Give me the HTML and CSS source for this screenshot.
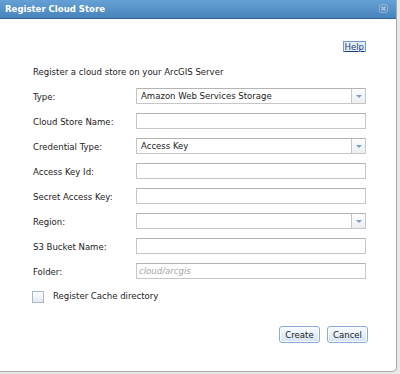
FILE: index.html
```html
<!DOCTYPE html>
<html lang="en">
<head>
    <meta charset="UTF-8">
    <title>Register Cloud Store</title>
    <link rel="stylesheet" href="styles.css">
</head>
<body>
    <div class="dialog">
        <div class="titlebar">
            <span class="title">Register Cloud Store</span>
            <span class="close-btn">
                <svg width="9" height="9" viewBox="0 0 9 9">
                    <rect x="0.5" y="0.5" width="8" height="8" rx="1.5" fill="none" stroke="#8fb1cf" stroke-width="1"/>
                    <path d="M2.5 2.5 L6.5 6.5 M6.5 2.5 L2.5 6.5" stroke="#a9c4dc" stroke-width="1.6"/>
                </svg>
            </span>
        </div>

        <div class="content">
            <div class="help-row">
                <a href="#" class="help-link">Help</a>
            </div>
            <p class="intro">Register a cloud store on your ArcGIS Server</p>

            <div class="form">
                <div class="form-row">
                    <label>Type:</label>
                    <div class="select">
                        <span class="select-value">Amazon Web Services Storage</span>
                        <span class="select-arrow"></span>
                    </div>
                </div>
                <div class="form-row">
                    <label>Cloud Store Name:</label>
                    <div class="text-input"></div>
                </div>
                <div class="form-row">
                    <label>Credential Type:</label>
                    <div class="select">
                        <span class="select-value">Access Key</span>
                        <span class="select-arrow"></span>
                    </div>
                </div>
                <div class="form-row">
                    <label>Access Key Id:</label>
                    <div class="text-input"></div>
                </div>
                <div class="form-row">
                    <label>Secret Access Key:</label>
                    <div class="text-input"></div>
                </div>
                <div class="form-row">
                    <label>Region:</label>
                    <div class="select">
                        <span class="select-value"></span>
                        <span class="select-arrow"></span>
                    </div>
                </div>
                <div class="form-row">
                    <label>S3 Bucket Name:</label>
                    <div class="text-input"></div>
                </div>
                <div class="form-row">
                    <label>Folder:</label>
                    <div class="text-input placeholder">cloud/arcgis</div>
                </div>
            </div>

            <div class="check-row">
                <span class="checkbox"></span>
                <span class="check-label">Register Cache directory</span>
            </div>

            <div class="actions">
                <button class="btn">Create</button>
                <button class="btn">Cancel</button>
            </div>
        </div>
    </div>
</body>
</html>
```

FILE: styles.css
```css
* {
    margin: 0;
    padding: 0;
    box-sizing: border-box;
}

body {
    background-color: #e9e9e9;
    font-family: Tahoma, 'DejaVu Sans Condensed', 'DejaVu Sans', sans-serif;
    font-size: 9.5px;
    color: #222;
    width: 400px;
    height: 374px;
    overflow: hidden;
}

.dialog {
    width: 397px;
    height: 372px;
    background-color: #fff;
    border-right: 1px solid #a8a8a8;
    border-bottom: 1px solid #a8a8a8;
    border-bottom-right-radius: 5px;
}

.titlebar {
    height: 19px;
    background: linear-gradient(#66a1d5, #4883bc);
    border-bottom: 1px solid #2f6697;
    display: flex;
    align-items: center;
    justify-content: space-between;
    padding: 0 5px 1px 5px;
}

.title {
    color: #fff;
    font-weight: bold;
    font-size: 9.5px;
}

.close-btn {
    display: flex;
    margin-right: 3px;
}

.content {
    padding: 22px 30px 0 33px;
}

.help-row {
    display: flex;
    justify-content: flex-end;
    height: 11px;
}

.help-link {
    color: #1c3f73;
    text-decoration: underline;
    line-height: 9px;
    padding: 0 1px;
    border: 1px solid #6d9ad0;
    background-color: #e3eefa;
}

.intro {
    margin-top: 14px;
    line-height: 11px;
}

.form {
    margin-top: 11px;
    display: flex;
    flex-direction: column;
    gap: 9px;
}

.form-row {
    display: flex;
    align-items: center;
    height: 16px;
}

.form-row label {
    width: 103px;
}

.text-input,
.select {
    width: 230px;
    height: 16px;
    border: 1px solid #c6c6c6;
    border-top-color: #b4b4b4;
    background-color: #fff;
}

.placeholder {
    color: #a4a4a4;
    font-style: italic;
    padding-left: 2px;
    line-height: 14px;
}

.select {
    display: flex;
}

.select-value {
    flex: 1;
    padding-left: 4px;
    line-height: 14px;
}

.select-arrow {
    width: 14px;
    border-left: 1px solid #c6c6c6;
    background: linear-gradient(#fdfdfd, #eceef2);
    position: relative;
}

.select-arrow::after {
    content: '';
    position: absolute;
    left: 4px;
    top: 6px;
    border-left: 3px solid transparent;
    border-right: 3px solid transparent;
    border-top: 3px solid #7f9cc4;
}

.check-row {
    margin-top: 12px;
    display: flex;
    align-items: center;
    margin-left: -1px;
}

.checkbox {
    width: 12px;
    height: 12px;
    border: 1px solid #a6b8cf;
    background: linear-gradient(#fdfdfd, #e3e9f1);
    margin-right: 9px;
}

.check-label {
    position: relative;
    top: -2px;
}

.actions {
    margin-top: 23px;
    margin-right: -2px;
    display: flex;
    justify-content: flex-end;
    gap: 7px;
}

.btn {
    font-family: inherit;
    font-size: 9.5px;
    color: #222;
    height: 17px;
    width: 41px;
    border: 1px solid #86acd9;
    border-radius: 3px;
    background: linear-gradient(#fafcfe, #d3e3f5);
    box-shadow: inset 0 0 0 1px #fff;
}
```
